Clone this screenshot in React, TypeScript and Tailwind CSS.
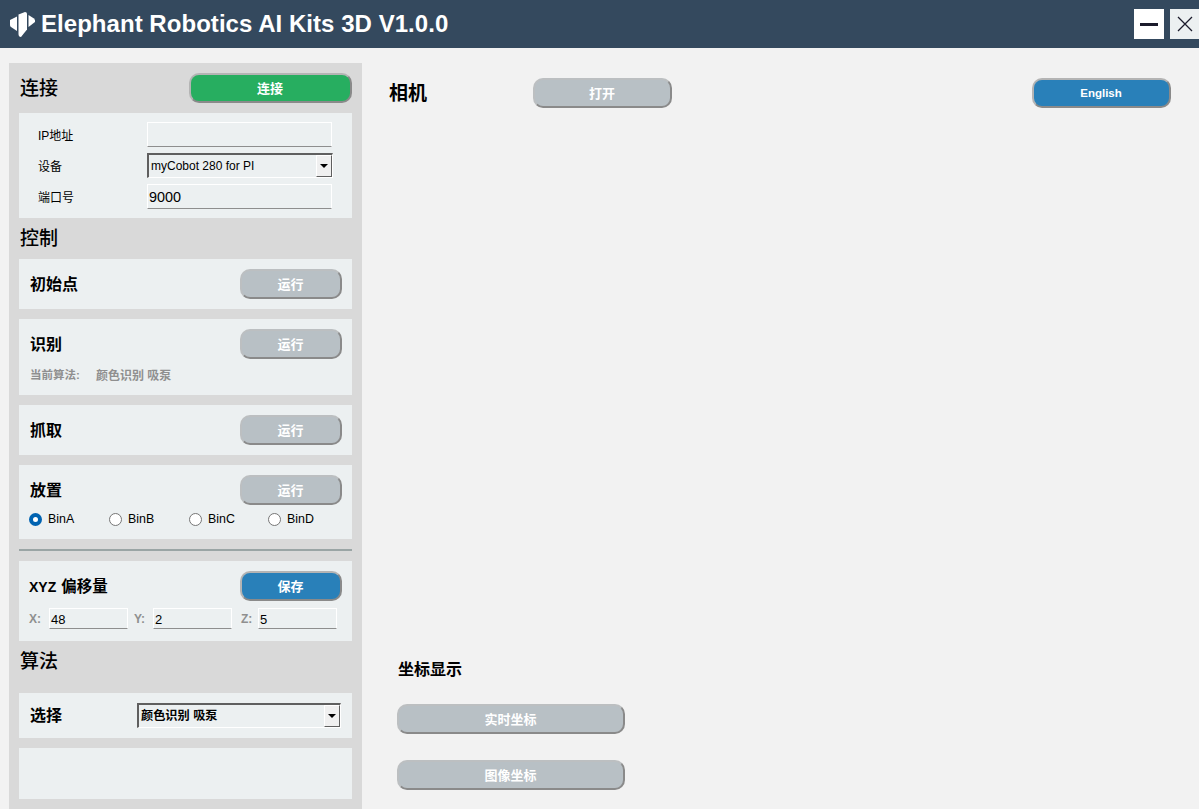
import type { ReactNode } from 'react'

const font = "font-['Liberation_Sans','Noto_Sans_CJK_SC',sans-serif]"

const inputCls =
  'h-[25px] border border-white border-b-[#8e8e8e] bg-[#ecf0f1] px-[1px] pt-[1px] text-[14.4px] leading-[23px] text-black'

const BTN_COLORS = {
  gray: 'bg-[#b8c0c5] border-t-[#bcbfc1] border-l-[#bcbfc1] border-r-[#8a8a8a] border-b-[#8a8a8a]',
  green: 'bg-[#27ae60] border-t-[#b4b4b4] border-l-[#b4b4b4] border-r-[#8a8a8a] border-b-[#8a8a8a]',
  blue: 'bg-[#2980b9] border-t-[#b4b4b4] border-l-[#b4b4b4] border-r-[#8a8a8a] border-b-[#8a8a8a]',
}

function Btn({ color = 'gray', className, children }: { color?: 'gray' | 'green' | 'blue'; className: string; children: ReactNode }) {
  return (
    <div
      className={`flex items-center justify-center rounded-[10px] border-2 pt-[1px] pr-[1px] text-[13px] font-bold text-white ${BTN_COLORS[color]} ${className}`}
    >
      {children}
    </div>
  )
}

function Card({ className, children }: { className: string; children?: ReactNode }) {
  return <div className={`bg-[#ecf0f1] ${className}`}>{children}</div>
}

function Heading({ className, children }: { className: string; children: ReactNode }) {
  return <div className={`flex items-center text-[19px] font-medium leading-none text-black ${className}`}>{children}</div>
}

function Combo({ className, text, bold }: { className: string; text: string; bold?: boolean }) {
  return (
    <div className={`flex h-[25px] items-stretch border-2 border-r border-b border-t-[#5f5f5f] border-l-[#5f5f5f] border-r-white border-b-white bg-[#ecf0f1] ${className}`}>
      <span className={`flex-1 pl-[2px] leading-[22px] text-black ${bold ? 'text-[12.2px] font-bold' : 'text-[12px]'}`}>{text}</span>
      <span className="flex w-[16px] items-center justify-center border border-t-white border-l-white border-r-[#5f5f5f] border-b-[#5f5f5f] bg-[#f0f0f0]">
        <span className="h-0 w-0 border-x-[4px] border-t-[4px] border-x-transparent border-t-black" />
      </span>
    </div>
  )
}

function RunRow({ label }: { label: string }) {
  return (
    <div className="flex items-center justify-between pt-[10px] pl-[11px] pr-[10px]">
      <span className="pt-[2px] text-[16px] font-bold leading-none text-black">{label}</span>
      <Btn className="h-[30px] w-[102px]">运行</Btn>
    </div>
  )
}

function Radio({ label, checked, className }: { label: string; checked?: boolean; className: string }) {
  return (
    <div className={`flex items-center gap-[6px] text-[12.4px] leading-none text-black ${className}`}>
      {checked ? (
        <span className="box-border h-[13px] w-[13px] rounded-full border-[4px] border-[#0063b1] bg-white" />
      ) : (
        <span className="box-border h-[13px] w-[13px] rounded-full border border-[#767676] bg-white" />
      )}
      {label}
    </div>
  )
}

function Offset({ axis, value, className }: { axis: string; value: string; className: string }) {
  return (
    <div className={`flex items-center ${className}`}>
      <span className="text-[12px] font-bold text-[#8f8f8f]">{axis}</span>
      <div className={`ml-auto w-[79px] !h-[21px] !px-[1px] !text-[13px] !leading-[19px] ${inputCls}`}>{value}</div>
    </div>
  )
}

function ConnectRow({ label, children }: { label: string; children: ReactNode }) {
  return (
    <div className="flex items-center">
      <span className="w-[109px] pt-[3px] text-[12px] leading-none text-black">{label}</span>
      {children}
    </div>
  )
}

export default function App() {
  return (
    <div className={`flex h-[809px] w-[1199px] flex-col overflow-hidden bg-[#f2f2f2] ${font}`}>
      <header className="flex h-[48px] shrink-0 items-center bg-[#34495e] pl-[9px]">
        <svg width="27" height="27" viewBox="9 9 27 27" className="shrink-0">
          <path d="M10 18 L17 14.5 V29 L11 25 Q10 24.5 10 23 Z" fill="#fff" />
          <path d="M18.5 12.5 L25 10 Q27 10 27 12 V27.5 L21 35 Q18.5 35 18.5 32 Z" fill="#fff" />
          <path d="M28.5 13 L34 16.5 Q35.5 18 35 20 L28.5 25 Z" fill="#fff" />
        </svg>
        <h1 className="ml-[5px] text-[24px] font-bold tracking-[0.04px] text-white">Elephant Robotics AI Kits 3D V1.0.0</h1>
        <div className="ml-auto flex h-[30px] items-center gap-[6px]">
          <div className="flex h-[30px] w-[30px] items-center justify-center bg-white">
            <span className="h-[3px] w-[18px] bg-[#1b1b2b]" />
          </div>
          <div className="flex h-[30px] w-[29px] items-center justify-center bg-[#ecf0f1]">
            <svg width="16" height="16" viewBox="0 0 16 16" stroke="#1b1b2b" strokeWidth="1.3">
              <path d="M1 1 L15 15 M15 1 L1 15" />
            </svg>
          </div>
        </div>
      </header>

      <div className="flex min-h-0 flex-1">
        <aside className="mt-[15px] ml-[9px] flex w-[353px] shrink-0 flex-col bg-[#d9d9d9] px-[10px]">
          <div className="flex h-[50px] items-center justify-between">
            <Heading className="ml-[1px]">连接</Heading>
            <Btn color="green" className="h-[30px] w-[163px]">连接</Btn>
          </div>

          <Card className="flex h-[105px] flex-col gap-[6px] pt-[9px] pl-[19px]">
            <ConnectRow label="IP地址"><div className={`w-[185px] ${inputCls}`} /></ConnectRow>
            <ConnectRow label="设备"><Combo className="w-[186px]" text="myCobot 280 for PI" /></ConnectRow>
            <ConnectRow label="端口号"><div className={`w-[185px] ${inputCls}`}>9000</div></ConnectRow>
          </Card>

          <Heading className="ml-[1px] h-[41px]">控制</Heading>

          <Card className="h-[50px]"><RunRow label="初始点" /></Card>
          <Card className="mt-[10px] h-[76px]">
            <RunRow label="识别" />
            <div className="mt-[11px] flex pl-[11px] text-[12px] font-bold leading-none text-[#8f8f8f]">
              <span className="w-[66px] text-[11.5px]">当前算法:</span>
              <span>颜色识别 吸泵</span>
            </div>
          </Card>
          <Card className="mt-[10px] h-[50px]"><RunRow label="抓取" /></Card>
          <Card className="mt-[10px] h-[74px]">
            <RunRow label="放置" />
            <div className="mt-[8px] flex pl-[10px]">
              <Radio label="BinA" checked className="w-[80px]" />
              <Radio label="BinB" className="w-[80px]" />
              <Radio label="BinC" className="w-[79px]" />
              <Radio label="BinD" className="w-[80px]" />
            </div>
          </Card>

          <div className="mt-[10px] h-[2px] bg-[#9aa5a5]" />

          <Card className="mt-[10px] h-[80px]">
            <div className="flex items-center justify-between pt-[10px] pl-[10px] pr-[10px]">
              <span className="pt-[2px] leading-none font-bold text-black">
                <span className="text-[14px]">XYZ</span>
                <span className="ml-[5px] text-[15.5px]">偏移量</span>
              </span>
              <Btn color="blue" className="h-[30px] w-[102px]">保存</Btn>
            </div>
            <div className="mt-[7px] flex pl-[10px]">
              <Offset axis="X:" value="48" className="mr-[6px] w-[99px]" />
              <Offset axis="Y:" value="2" className="mr-[9px] w-[98px]" />
              <Offset axis="Z:" value="5" className="w-[96px]" />
            </div>
          </Card>

          <Heading className="ml-[1px] h-[40px]">算法</Heading>

          <Card className="mt-[12px] flex h-[45px] items-center pl-[11px]">
            <span className="w-[107px] text-[16px] font-bold leading-none text-black">选择</span>
            <Combo className="w-[204px]" text="颜色识别 吸泵" bold />
          </Card>
          <Card className="mt-[10px] h-[51px]" />
        </aside>

        <main className="flex flex-1 flex-col">
          <div className="flex items-center pt-[30px] pr-[28px] pl-[27px]">
            <span className="h-[30px] w-[144px] text-[19px] font-bold leading-[32px] text-black">相机</span>
            <Btn className="h-[30px] w-[139px]">打开</Btn>
            <Btn color="blue" className="ml-auto h-[30px] w-[139px] !text-[11.5px]">English</Btn>
          </div>
          <div className="mt-auto flex flex-col items-start pb-[19px] pl-[35px]">
            <span className="ml-[1px] text-[16px] font-bold leading-none text-black">坐标显示</span>
            <Btn className="mt-[26px] h-[30px] w-[228px]">实时坐标</Btn>
            <Btn className="mt-[26px] h-[30px] w-[228px]">图像坐标</Btn>
          </div>
        </main>
      </div>
    </div>
  )
}
